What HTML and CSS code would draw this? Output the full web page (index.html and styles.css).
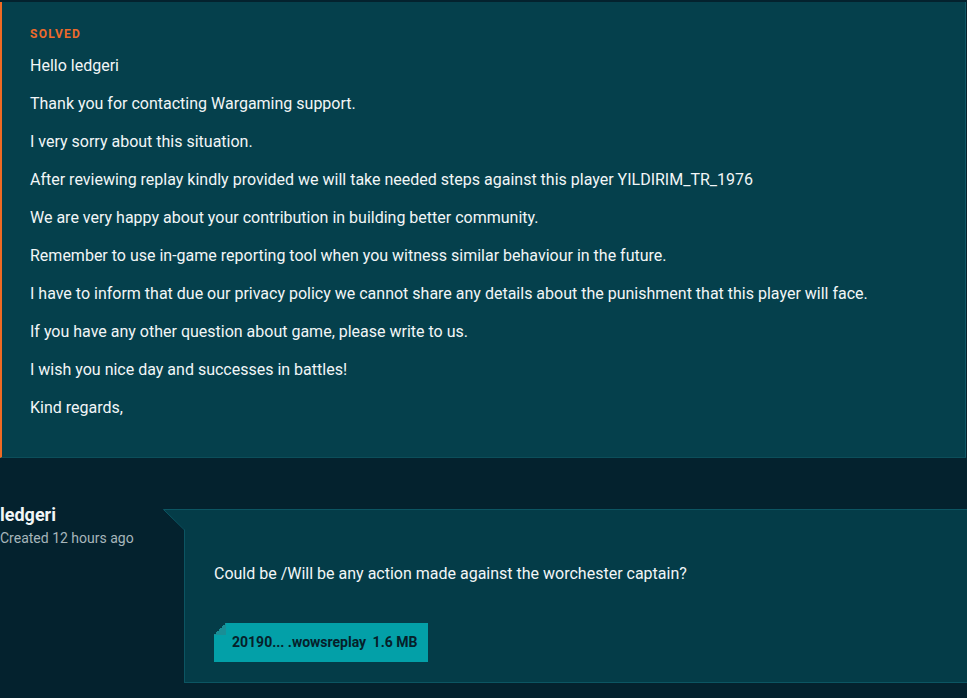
FILE: index.html
```html
<!DOCTYPE html>
<html lang="en">
  <head>
    <meta charset="utf-8" />
    <meta name="viewport" content="width=device-width, initial-scale=1" />
    <title>Request</title>
    <link rel="stylesheet" href="styles.css">
  </head>
  <body>
    <div class="page">
      <!-- agent reply -->
      <div class="reply">
        <div class="status">SOLVED</div>
        <p>Hello ledgeri</p>
        <p>Thank you for contacting Wargaming support.</p>
        <p>I very sorry about this situation.</p>
        <p>After reviewing replay kindly provided we will take needed steps against this player YILDIRIM_TR_1976</p>
        <p>We are very happy about your contribution in building better community.</p>
        <p>Remember to use in-game reporting tool when you witness similar behaviour in the future.</p>
        <p>I have to inform that due our privacy policy we cannot share any details about the punishment that this player will face.</p>
        <p>If you have any other question about game, please write to us.</p>
        <p>I wish you nice day and successes in battles!</p>
        <p>Kind regards,</p>
      </div>

      <!-- user comment -->
      <div class="comment">
        <div class="author">
          <div class="name">ledgeri</div>
          <div class="created">Created 12 hours ago</div>
        </div>
        <div class="bubble">
          <svg class="arrow" width="22" height="21" viewBox="0 0 22 21">
            <polygon points="0,0.5 22,0.5 22,21" fill="#043c48"/>
            <polyline points="22,0.5 0.5,0.5 21.5,21" fill="none" stroke="#0c5562" stroke-width="1"/>
          </svg>
          <p>Could be /Will be any action made against the worchester captain?</p>
          <a class="file" href="#">20190... .wowsreplay <span>1.6 MB</span></a>
        </div>
      </div>
    </div>
  </body>
</html>
```

FILE: styles.css
```css
body{
  margin: 0;
  background-color: #04222e;
  font-family: Roboto, "Liberation Sans", sans-serif;
  color: #f2f6f7;
  overflow: hidden;
}

.page{
  width: 967px;
  padding-top: 2px;
}

.reply{
  width: 935px;
  background-color: #05404c;
  border-left: 2px solid #f06a24;
  border-right: 1px solid #0f5866;
  border-bottom: 1px solid #0c4e5a;
  padding: 22px 0 22px 28px;
}

.status{
  color: #ee6a2b;
  font-size: 12px;
  font-weight: bold;
  letter-spacing: 1.3px;
  line-height: 20px;
  margin-bottom: 11px;
}

.reply p{
  font-size: 16px;
  line-height: 22px;
  margin: 0 0 16px 0;
}

.comment{
  display: flex;
  margin-top: 51px;
}

.author{
  width: 184px;
}

.name{
  font-size: 18px;
  font-weight: bold;
  line-height: 22px;
  margin-top: -5px;
}

.created{
  font-size: 14px;
  color: #a7b6bb;
  line-height: 20px;
  margin-top: 2px;
}

.bubble{
  position: relative;
  flex: 1;
  margin-right: -4px;
  background-color: #043c48;
  border: 1px solid #0c5562;
  padding: 53px 29px 20px 29px;
}

.arrow{
  position: absolute;
  left: -22px;
  top: -1px;
}

.bubble p{
  font-size: 16px;
  line-height: 22px;
  margin: 0 0 38px 0;
}

.file{
  position: relative;
  display: inline-block;
  height: 39px;
  line-height: 39px;
  padding: 0 11px 0 18px;
  background-color: #03a0a8;
  color: #06202a;
  font-size: 14px;
  font-weight: bold;
  text-decoration: none;
}

.file span{
  margin-left: 3px;
}

.file::before{
  content: "";
  position: absolute;
  left: 0;
  top: 0;
  width: 12px;
  height: 12px;
  background: linear-gradient(135deg, #043c48 50%, #1a8e96 50%);
}
```
